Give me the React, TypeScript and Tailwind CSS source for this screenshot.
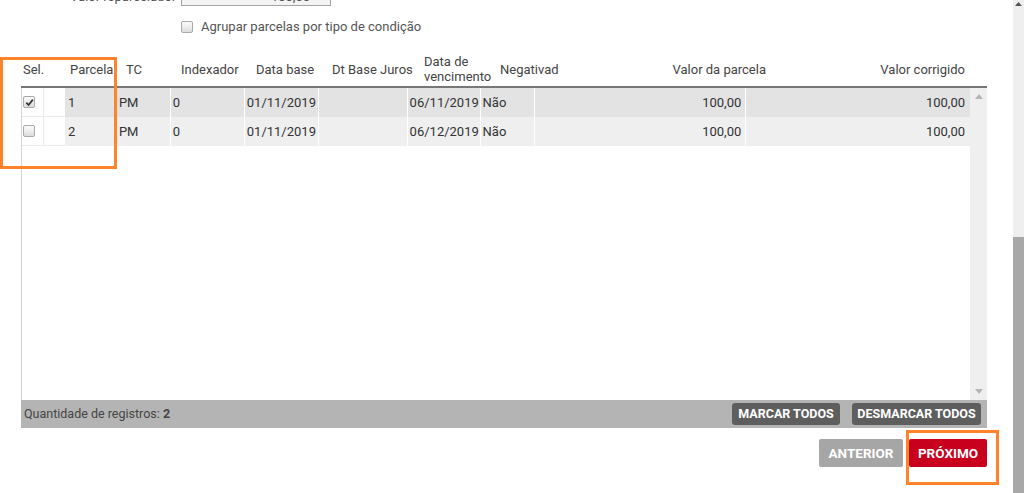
import React from "react";

const font = { fontFamily: "Roboto, 'Liberation Sans', sans-serif" };

function Check({ checked }: { checked?: boolean }) {
  return (
    <div className="w-[12px] h-[12px] rounded-[2px] border border-[#a9a9a9] bg-gradient-to-b from-[#fdfdfd] to-[#dcdcdc] flex items-center justify-center">
      {checked && (
        <svg width="9" height="9" viewBox="0 0 10 10">
          <path d="M1.5 5.2 L4 7.8 L8.7 1.8" fill="none" stroke="#333" strokeWidth="1.9" />
        </svg>
      )}
    </div>
  );
}

type Row = { n: string; dv: string; bg: string };
const rows: Row[] = [
  { n: "1", dv: "06/11/2019", bg: "bg-[#e3e3e3]" },
  { n: "2", dv: "06/12/2019", bg: "bg-[#efefef]" },
];

export default function App() {
  return (
    <div className="w-[1024px] h-[493px] overflow-hidden bg-white flex text-[13px] text-[#333]" style={font}>
      <div className="relative flex-1 flex flex-col">
        {/* top field (cut) */}
        <div className="mt-[-12px] h-[18px] flex items-center">
          <div className="w-[175px] text-right text-[#555]">Valor reparcelado:</div>
          <div className="ml-[6px] w-[150px] h-[18px] border border-[#a5a5a5] bg-[#f3f3f3] flex items-center justify-end pr-[20px] text-[#555]">
            100,00
          </div>
        </div>
        <div className="mt-[9px] h-[24px] flex items-center pl-[181px]">
          <Check />
          <span className="ml-[8px] text-[#555]">Agrupar parcelas por tipo de condição</span>
        </div>

        {/* table */}
        <div className="mt-[18px] ml-[21px] w-[966px] flex flex-col">
          {/* header */}
          <div className="h-[31px] pl-[2px] pb-[5px] flex items-center border-b-2 border-[#777] text-[#444] leading-[15px] whitespace-nowrap">
            <div className="w-[47px]">Sel.</div>
            <div className="w-[56px]">Parcela</div>
            <div className="w-[55px]">TC</div>
            <div className="w-[75px]">Indexador</div>
            <div className="w-[76px]">Data base</div>
            <div className="w-[92px]">Dt Base Juros</div>
            <div className="w-[76px] flex flex-col">
              <span>Data de</span>
              <span>vencimento</span>
            </div>
            <div className="w-[60px]">Negativad</div>
            <div className="w-[206px] text-right">Valor da parcela</div>
            <div className="w-[199px] text-right">Valor corrigido</div>
          </div>

          {/* body */}
          <div className="h-[312px] flex border-l border-[#d4d4d4]">
            <div className="w-[948px] flex flex-col">
              {rows.map((r, i) => (
                <div key={i} className="h-[29px] flex items-center">
                  <div className="w-[22px] h-full flex items-center pl-[1px] bg-white border-r border-b border-[#eaeaea]">
                    <Check checked={i === 0} />
                  </div>
                  <div className="w-[21px] h-full bg-white border-b border-[#eaeaea]" />
                  <div className={`w-[50px] h-full flex items-center pl-[3px] ${r.bg} border-r border-white`}>{r.n}</div>
                  <div className={`w-[56px] h-full flex items-center pl-[4px] ${r.bg} border-r border-white`}>PM</div>
                  <div className={`w-[74px] h-full flex items-center pl-[2px] ${r.bg} border-r border-white`}>0</div>
                  <div className={`w-[74px] h-full flex items-center pl-[2px] ${r.bg} border-r border-white`}>01/11/2019</div>
                  <div className={`w-[89px] h-full ${r.bg} border-r border-white`} />
                  <div className={`w-[73px] h-full flex items-center pl-[2px] ${r.bg} border-r border-white`}>{r.dv}</div>
                  <div className={`w-[55px] h-full flex items-center pl-[2px] ${r.bg} border-r border-white`}>Não</div>
                  <div className={`w-[211px] h-full flex items-center justify-end pr-[4px] ${r.bg} border-r border-white`}>100,00</div>
                  <div className={`w-[224px] h-full flex items-center justify-end pr-[5px] ${r.bg}`}>100,00</div>
                </div>
              ))}
            </div>
            <div className="w-[17px] bg-[#efefef] flex flex-col items-center justify-between py-[6px]">
              <svg width="8" height="5" viewBox="0 0 8 5"><path d="M0 5 L4 0 L8 5 Z" fill="#b5b5b5" /></svg>
              <svg width="8" height="5" viewBox="0 0 8 5"><path d="M0 0 L4 5 L8 0 Z" fill="#b5b5b5" /></svg>
            </div>
          </div>

          {/* footer */}
          <div className="h-[28px] bg-[#b4b4b4] flex items-center pl-[3px] pr-[6px] text-[#444] text-[12.5px]">
            <span className="flex-1">
              Quantidade de registros: <b className="font-bold">2</b>
            </span>
            <button className="h-[22px] w-[108px] rounded-[3px] bg-[#5e5e5e] text-white font-bold text-[12.5px]">MARCAR TODOS</button>
            <button className="ml-[12px] h-[22px] w-[129px] rounded-[3px] bg-[#5e5e5e] text-white font-bold text-[12.5px]">DESMARCAR TODOS</button>
          </div>

          {/* nav buttons */}
          <div className="mt-[11px] flex justify-end">
            <button className="h-[28px] w-[84px] rounded-[2px] bg-[#a6a6a6] text-white font-bold text-[13.5px]">ANTERIOR</button>
            <button className="ml-[6px] h-[28px] w-[78px] rounded-[2px] bg-[#c8001e] text-white font-bold text-[13.5px]">PRÓXIMO</button>
          </div>
        </div>

        {/* orange highlight overlays */}
        <div className="absolute left-0 top-[57px] w-[117px] h-[112px] border-[3px] border-[#ff832b] pointer-events-none" />
        <div className="absolute left-[906px] top-[430px] w-[93px] h-[55px] border-[3px] border-[#ff832b] pointer-events-none" />
      </div>

      {/* page scrollbar */}
      <div className="w-[11px] bg-[#efefef] flex flex-col items-center">
        <svg className="mt-[2px]" width="7" height="4" viewBox="0 0 7 4"><path d="M0 4 L3.5 0 L7 4 Z" fill="#555" /></svg>
        <div className="mt-[231px] w-full flex-1 bg-[#a8a8a8]" />
      </div>
    </div>
  );
}
